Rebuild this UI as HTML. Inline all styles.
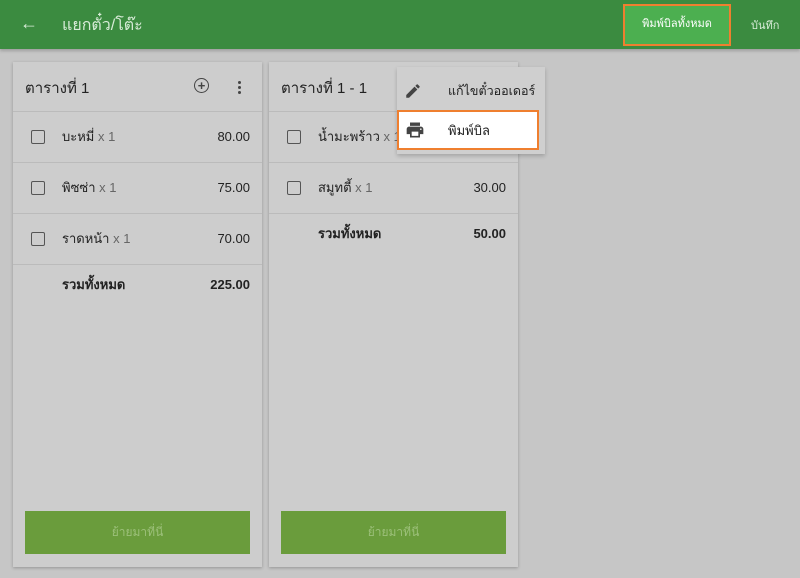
<!DOCTYPE html><html><head><meta charset="utf-8"><style>
body{margin:0;width:800px;height:578px;background:#c6c6c6;font-family:"Liberation Sans","DejaVu Sans",sans-serif;position:relative;overflow:hidden;color:#222}
.hdr{position:absolute;left:0;top:0;width:800px;height:49px;background:#3b8b40;box-shadow:0 2px 3px rgba(0,0,0,.2)}
.t{position:absolute;color:#d8ecd8}
.card{position:absolute;top:62px;width:249px;height:505px;background:#cdcdcd;box-shadow:0 1px 3px rgba(0,0,0,.25)}
.row{position:absolute;left:0;width:249px;border-top:1px solid #bbb}
.cb{position:absolute;left:18px;width:12px;height:12px;border:1.5px solid #555;border-radius:2px}
.nm{position:absolute;left:49px;font-size:13px;color:#222}
.nm span{color:#666}
.pr{position:absolute;right:12px;font-size:13px}
.btn{position:absolute;left:12px;top:449px;width:225px;height:43px;background:#6a9c3c;color:#9cc07a;font-size:12px;text-align:center;line-height:43px}
</style></head><body>
<div class="hdr">
<div class="t" style="left:20px;top:13px;font-size:18px">←</div>
<div class="t" style="left:62px;top:13px;font-size:16px">แยกตั๋ว/โต๊ะ</div>
<div style="position:absolute;left:623px;top:4px;width:104px;height:38px;border:2px solid #ef7f2f;background:#4caf50;color:#fff;font-size:11px;text-align:center;line-height:36px">พิมพ์บิลทั้งหมด</div>
<div class="t" style="left:751px;top:16px;font-size:11px">บันทึก</div>
</div>
<div class="card" style="left:13px">
<div style="position:absolute;left:12px;top:14px;font-size:15px">ตารางที่ 1</div>
<div style="position:absolute;left:181px;top:16px;width:13px;height:13px;border:1.5px solid #444;border-radius:50%;text-align:center;line-height:13px;font-size:13px;color:#444;font-weight:bold">+</div>
<div style="position:absolute;left:225px;top:19px;width:3px;height:3px;background:#444;border-radius:50%;box-shadow:0 5px 0 #444,0 10px 0 #444"></div>
<div class="row" style="top:49px;height:50px"><div class="cb" style="top:18px"></div><div class="nm" style="top:14px">บะหมี่ <span>x 1</span></div><div class="pr" style="top:17px">80.00</div></div>
<div class="row" style="top:100px;height:50px"><div class="cb" style="top:18px"></div><div class="nm" style="top:14px">พิซซ่า <span>x 1</span></div><div class="pr" style="top:17px">75.00</div></div>
<div class="row" style="top:151px;height:50px"><div class="cb" style="top:18px"></div><div class="nm" style="top:14px">ราดหน้า <span>x 1</span></div><div class="pr" style="top:17px">70.00</div></div>
<div class="row" style="top:202px;height:40px"><div class="nm" style="top:9px;font-weight:bold">รวมทั้งหมด</div><div class="pr" style="top:12px;font-weight:bold">225.00</div></div>
<div class="btn">ย้ายมาที่นี่</div>
</div>
<div class="card" style="left:269px">
<div style="position:absolute;left:12px;top:14px;font-size:15px">ตารางที่ 1 - 1</div>
<div class="row" style="top:49px;height:50px"><div class="cb" style="top:18px"></div><div class="nm" style="top:14px">น้ำมะพร้าว <span>x 1</span></div></div>
<div class="row" style="top:100px;height:50px"><div class="cb" style="top:18px"></div><div class="nm" style="top:14px">สมูทตี้ <span>x 1</span></div><div class="pr" style="top:17px">30.00</div></div>
<div class="row" style="top:151px;height:40px"><div class="nm" style="top:9px;font-weight:bold">รวมทั้งหมด</div><div class="pr" style="top:12px;font-weight:bold">50.00</div></div>
<div class="btn">ย้ายมาที่นี่</div>
</div>
<div style="position:absolute;left:397px;top:67px;width:148px;height:87px;background:#cfcfcf;box-shadow:0 2px 4px rgba(0,0,0,.2)">
<svg style="position:absolute;left:7px;top:15px" width="18" height="18" viewBox="0 0 24 24"><path fill="#444" d="M3 17.25V21h3.75L17.8 9.94l-3.75-3.75L3 17.25zM20.7 7.04a1 1 0 000-1.41l-2.34-2.34a1 1 0 00-1.41 0l-1.83 1.83 3.75 3.75 1.83-1.83z"/></svg>
<div style="position:absolute;left:51px;top:14px;font-size:12.5px">แก้ไขตั๋วออเดอร์</div>
</div>
<div style="position:absolute;left:397px;top:110px;width:138px;height:36px;border:2px solid #ef7f2f;background:#fff">
<svg style="position:absolute;left:6px;top:8px" width="20" height="20" viewBox="0 0 24 24"><path fill="#444" d="M19 8H5a3 3 0 00-3 3v6h4v4h12v-4h4v-6a3 3 0 00-3-3zm-3 11H8v-5h8v5zm3-7a1 1 0 110-2 1 1 0 010 2zm-1-9H6v4h12V3z"/></svg>
<div style="position:absolute;left:49px;top:8px;font-size:13px">พิมพ์บิล</div>
</div>
</body></html>
